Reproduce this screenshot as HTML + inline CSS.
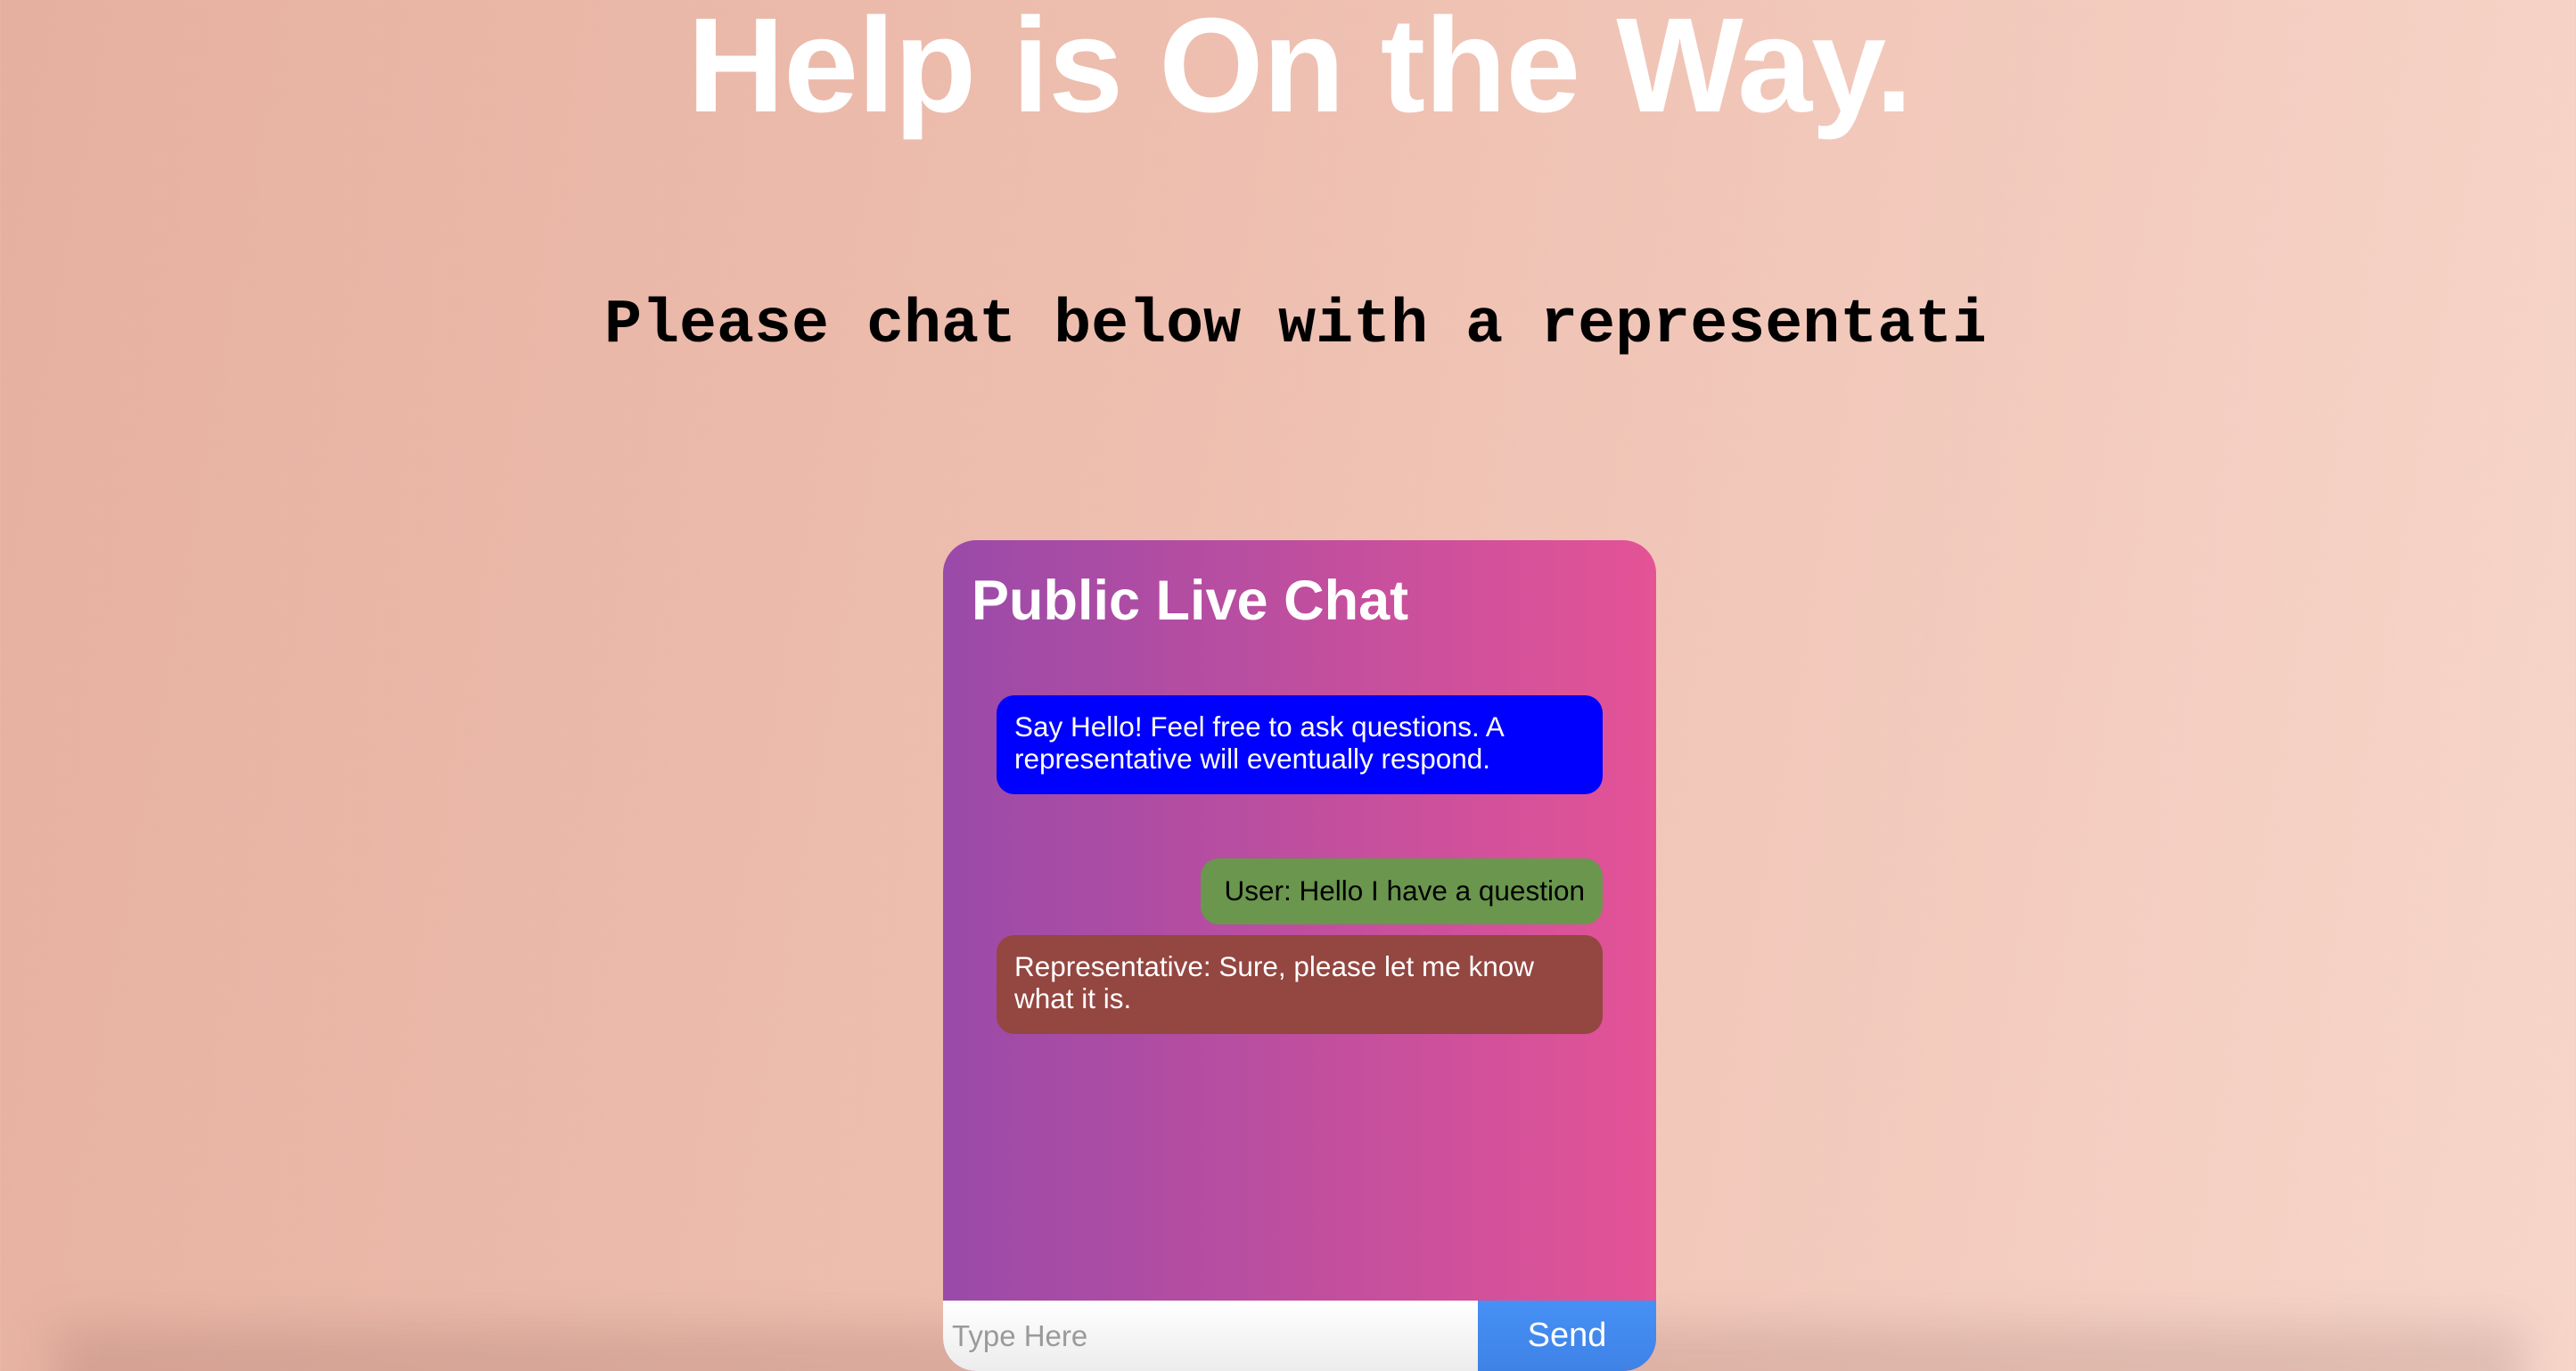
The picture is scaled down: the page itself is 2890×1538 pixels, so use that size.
<!DOCTYPE html>
<html><head><meta charset="utf-8"><style>
html,body{margin:0;padding:0;width:2890px;height:1538px;overflow:hidden}
body{position:relative;background:linear-gradient(100deg,#e6b0a0 0%,#eebfb0 45%,#f7d6ca 100%);font-family:"Liberation Sans",Arial,sans-serif}
.shadow{position:absolute;left:60px;right:60px;bottom:-40px;height:90px;background:rgba(120,80,70,0.18);filter:blur(25px)}
h1{position:absolute;left:0;width:2916px;top:-12px;margin:0;text-align:center;color:#fff;font-weight:bold;font-size:151px;line-height:170px;letter-spacing:-1px}
.sub{position:absolute;left:678px;top:326px;width:1548px;overflow:hidden;white-space:nowrap;font-family:"Liberation Mono","Courier New",monospace;font-weight:bold;font-size:70px;letter-spacing:0px;line-height:80px;color:#000}
.chat{position:absolute;left:1058px;top:606px;width:800px;height:932px;border-radius:37px;overflow:hidden;background:linear-gradient(90deg,#9a4aa9 0%,#bb4ea0 45%,#e45396 100%)}
.title{position:absolute;left:32px;top:28px;color:#fff;font-weight:bold;font-size:63px;line-height:80px}
.b{position:absolute;left:60px;width:680px;border-radius:20px;font-size:31.5px;line-height:36px;padding:0 20px;box-sizing:border-box;color:#fff}
.blue{top:174px;height:111px;background:#0000ff;padding-top:17px}
.green{left:289px;width:451px;top:357px;height:74px;background:#6a964e;color:#000;padding-top:18px;text-align:right;white-space:nowrap}
.brown{top:443px;height:111px;background:#944641;padding-top:17px}
.inp{position:absolute;left:0;top:853px;width:600px;height:79px;background:linear-gradient(#fff,#ececec);color:#9a9a9a;font-size:33px;line-height:79px;padding-left:10px;box-sizing:border-box}
.send{position:absolute;left:600px;top:853px;width:200px;height:79px;background:linear-gradient(#4690f5,#3f82e6);color:#fff;font-size:38px;line-height:79px;text-align:center}
</style></head><body>
<div class="shadow"></div>
<h1>Help is On the Way.</h1>
<div class="sub">Please chat below with a representative.</div>
<div class="chat">
<div class="title">Public Live Chat</div>
<div class="b blue">Say Hello! Feel free to ask questions. A representative will eventually respond.</div>
<div class="b green">User: Hello I have a question</div>
<div class="b brown">Representative: Sure, please let me know what it is.</div>
<div class="inp">Type Here</div>
<div class="send">Send</div>
</div>
</body></html>
